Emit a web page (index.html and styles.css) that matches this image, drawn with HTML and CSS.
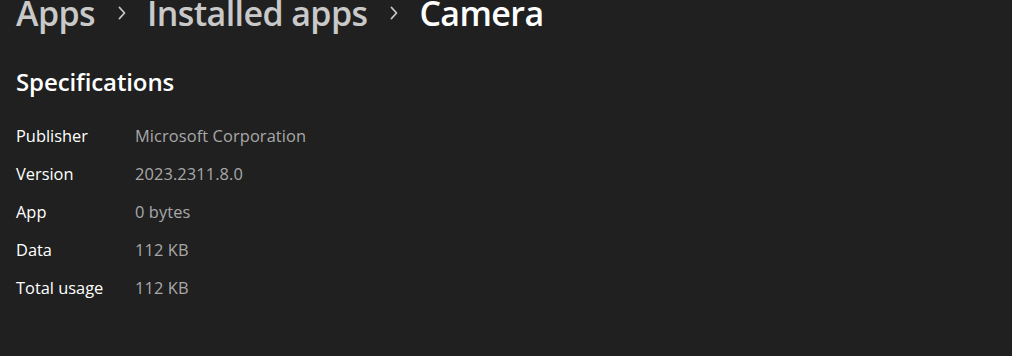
FILE: index.html
```html
<!DOCTYPE html>
<html lang="en">
<head>
<meta charset="utf-8">
<title>Camera</title>
<link rel="stylesheet" href="styles.css">
</head>
<body>
<div class="page">
  <nav class="crumbs">
    <span class="crumb">Apps</span>
    <svg class="chev" viewBox="0 0 8 14" width="8" height="14"><polyline points="1.5,1.5 6.5,7 1.5,12.5" fill="none" stroke="currentColor" stroke-width="1.8" stroke-linecap="round" stroke-linejoin="round"/></svg>
    <span class="crumb">Installed apps</span>
    <svg class="chev" viewBox="0 0 8 14" width="8" height="14"><polyline points="1.5,1.5 6.5,7 1.5,12.5" fill="none" stroke="currentColor" stroke-width="1.8" stroke-linecap="round" stroke-linejoin="round"/></svg>
    <span class="crumb current">Camera</span>
  </nav>
  <h2 class="section">Specifications</h2>
  <dl class="specs">
    <div class="row"><dt>Publisher</dt><dd>Microsoft Corporation</dd></div>
    <div class="row"><dt>Version</dt><dd>2023.2311.8.0</dd></div>
    <div class="row"><dt>App</dt><dd>0 bytes</dd></div>
    <div class="row"><dt>Data</dt><dd>112 KB</dd></div>
    <div class="row"><dt>Total usage</dt><dd>112 KB</dd></div>
  </dl>
</div>
</body>
</html>
```
FILE: styles.css
```css
html, body {
  margin: 0;
  padding: 0;
  background: #202020;
  height: 100%;
  overflow: hidden;
}
body {
  font-family: "Open Sans", "Noto Sans", sans-serif;
  color: #ffffff;
}
.page {
  padding: 0 16px;
}
.crumbs {
  display: flex;
  align-items: center;
  margin-top: -13px;
  height: 52px;
}
.crumb {
  font-size: 34px;
  font-weight: 600;
  color: #c9c9c9;
  letter-spacing: -0.6px;
  line-height: 52px;
}
.crumb.current {
  color: #ffffff;
}
.chev {
  color: #c9c9c9;
  margin: 0 21px 0 23px;
}
.section {
  margin: 28px 0 0 0;
  font-size: 24px;
  font-weight: 600;
  line-height: 30px;
  letter-spacing: -0.1px;
}
.specs {
  margin: 19px 0 0 0;
}
.row {
  display: flex;
  height: 38px;
  align-items: center;
}
dt {
  width: 119px;
  font-size: 16.4px;
  color: #ffffff;
}
dd {
  margin: 0;
  font-size: 16.4px;
  letter-spacing: 0.1px;
  color: #a8a8a8;
}
```
